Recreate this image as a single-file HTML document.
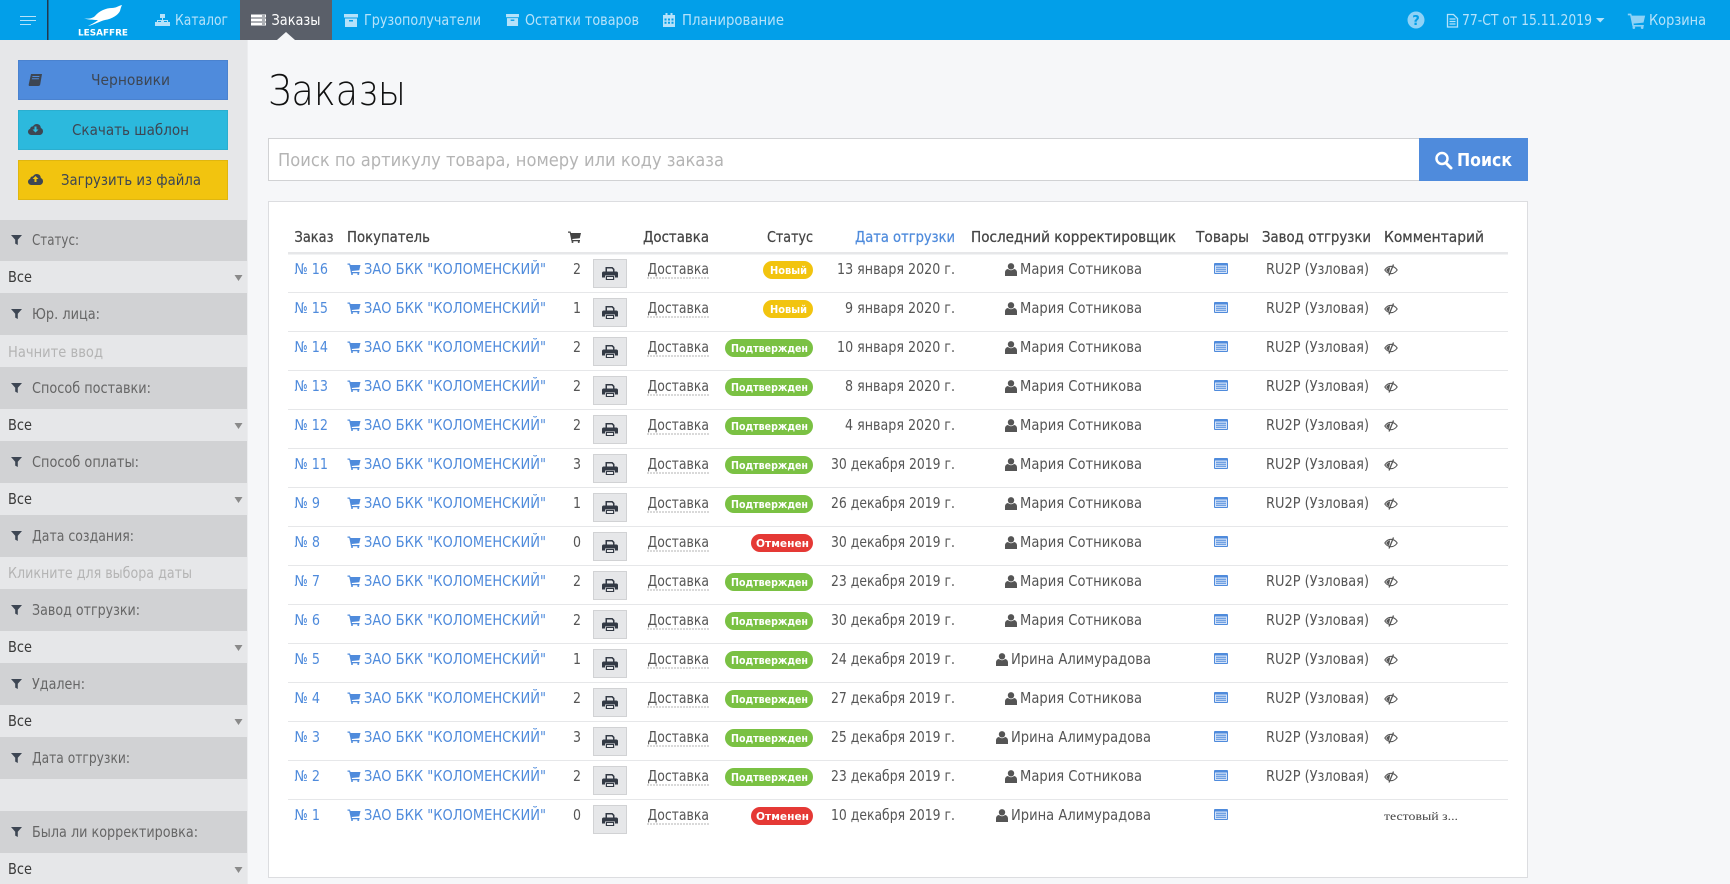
<!DOCTYPE html>
<html lang="ru"><head><meta charset="utf-8"><title>Заказы</title>
<style>
html,body{margin:0;padding:0;width:1730px;height:884px;overflow:hidden;background:#f6f7f9}
svg{display:block}
text{font-family:"DejaVu Sans","Liberation Sans",sans-serif;font-size:15px;fill:#555}
.nav{fill:#b5e2fa}
.btn{fill:#3d4653;font-size:15px}
.lab{fill:#666}
.val{fill:#3a3a3a}
.ph{fill:#b4b4b4}
.th{fill:#444;stroke:#444;stroke-width:.25px}
.a{fill:#4f8bdc}
.dl{fill:#555}
.bd{fill:#fff;font-size:11px;font-weight:bold}
</style></head><body>
<svg xmlns="http://www.w3.org/2000/svg" width="1730" height="884" viewBox="0 0 1730 884">
<defs>
<symbol id="cart" viewBox="0 0 26 24"><path fill="currentColor" d="M0 1h5l1 3h20l-2.500 10.500L8.500 16l.5 2h15v2.500H7L3.500 3.500H0z"/><circle fill="currentColor" cx="9" cy="22" r="2"/><circle fill="currentColor" cx="21.500" cy="22" r="2"/></symbol>
<symbol id="user" viewBox="0 0 12 13"><circle fill="currentColor" cx="6" cy="3.300" r="3.200"/><path fill="currentColor" d="M0 13v-3.500C0 7.500 1.500 6 3 6c.8.800 1.800 1.200 3 1.200S8.200 6.800 9 6c1.500 0 3 1.500 3 3.500V13z"/></symbol>
<symbol id="list" viewBox="0 0 14 11"><rect width="14" height="11" rx="1" fill="#4f8bdc"/><rect x="1" y="2.500" width="12" height="7.500" fill="#d5e3f8"/><path fill="#4f8bdc" d="M2 3.800h10v1H2zM2 5.800h10v1H2zM2 7.800h10v1H2z"/></symbol>
<symbol id="eye" viewBox="0 0 14 12"><path fill="none" stroke="#555" stroke-width="1.100" d="M.8 6C2.500 3.500 4.500 2.300 7 2.300S11.500 3.500 13.200 6C11.500 8.500 9.500 9.700 7 9.700S2.500 8.500.8 6z"/><path fill="#555" d="M2.200 6c1-1.500 2.300-2.400 4-2.800L5 8.700C3.800 8.200 2.900 7.200 2.200 6z"/><path stroke="#555" stroke-width="1.300" d="M9.500.5L5 11.500"/></symbol>
<symbol id="printer" viewBox="0 0 16 13"><path fill="#333a45" d="M3.500 0h7l2 2v3h-1.500V2.800L9.800 1.500H5V5H3.500z"/><path fill="#333a45" d="M1.500 4.500h13c.8 0 1.500.7 1.500 1.500v4.500h-3V8.500H3v2H0V6c0-.8.700-1.500 1.500-1.500z"/><path fill="#333a45" d="M3.800 9h8.400v4H3.800zM5 10v2h6v-2z" fill-rule="evenodd"/></symbol>
<symbol id="funnel" viewBox="0 0 11 10"><path fill="#3d4653" d="M0 0h11L6.800 4.800V10L4.200 8.600V4.800z"/></symbol>
<symbol id="cloud" viewBox="0 0 15 11"><path fill="#3d4653" d="M3.300 11C1.500 11 0 9.600 0 7.800c0-1.400.9-2.600 2.200-3C2.300 3.300 3.500 2.200 5 2.400 5.800 1 7.100 0 8.800 0c2.300 0 4 1.800 4 4 1.300.4 2.200 1.700 2.200 3.200 0 2.100-1.600 3.800-3.700 3.800z"/></symbol>
<symbol id="archive" viewBox="0 0 14 13"><path fill="#b5e2fa" d="M0 0h14v3.500H0zM1 4.500h12V13H1z"/><rect x="5" y="6" width="4" height="1.500" fill="#029fe9"/></symbol>
<g id="caret"><path fill="#8a8a8a" d="M0 0h8L4 6z"/></g>
</defs>

<!-- page -->
<rect width="1730" height="884" fill="#f6f7f9"/>

<!-- top bar -->
<rect width="1730" height="40" fill="#029fe9"/>
<path d="M20 16.500h16M20 20.500h16M20 24.500h11" stroke="#b5e2fa" stroke-width="1"/>
<rect x="47" width="1.500" height="40" fill="#22384d"/>
<path fill="#fff" d="M122 5C118 6 116 8 112 8C106 8 99 11 95 16C93 18 90 19 84 18.500C90 20 95 20 98 20C96 22 92 24 88 26C94 25 100 21 105 20C112 19 118 15 120 11C120.500 9 121 7 122 5z"/>
<text x="78" y="35.500" style="fill:#fff;font-size:9px;font-weight:bold" textLength="50" lengthAdjust="spacingAndGlyphs">LESAFFRE</text>

<!-- nav icons -->
<path fill="#b5e2fa" d="M160 14h5v4h-2v2h5v2h2v4h-5v-4h2v-1h-3v1h1v4h-5v-4h1v-1h-3v1h2v4h-5v-4h2v-2h5v-2h-2z"/>
<text class="nav" x="175" y="25" textLength="53" lengthAdjust="spacingAndGlyphs">Каталог</text>
<rect x="240" width="92" height="40" fill="#5a5f69"/>
<path fill="#f6f7f9" d="M277 40l9-8 9 8z"/>
<path fill="#fff" d="M251 14.500h15v3h-15zM251 18.500h15v3h-15zM251 22.500h15v3h-15z"/>
<path fill="#5a5f69" d="M262 15.500h3v1h-3zM262 19.500h3v1h-3zM262 23.500h3v1h-3z"/>
<text x="271.500" y="25" style="fill:#fff" textLength="49" lengthAdjust="spacingAndGlyphs">Заказы</text>
<use href="#archive" x="344" y="14" width="14" height="13"/>
<text class="nav" x="364" y="25" textLength="117" lengthAdjust="spacingAndGlyphs">Грузополучатели</text>
<use href="#archive" x="506" y="14" width="13" height="12"/>
<text class="nav" x="525" y="25" textLength="114" lengthAdjust="spacingAndGlyphs">Остатки товаров</text>
<path fill="#b5e2fa" fill-rule="evenodd" d="M663 15h2.500v-2h2v2h3v-2h2v2h2.500v12h-12zM664.500 18.500v2h2v-2zM668 18.500v2h2v-2zM671.500 18.500v2h2v-2zM664.500 21.800v2h2v-2zM668 21.800v2h2v-2zM671.500 21.800v2h2v-2z"/>
<text class="nav" x="682" y="25" textLength="102" lengthAdjust="spacingAndGlyphs">Планирование</text>

<circle cx="1416" cy="20" r="8.500" fill="#8fd2f6"/>
<text x="1412.300" y="25" style="fill:#029fe9;font-size:13px;font-weight:bold">?</text>
<path fill="none" stroke="#b5e2fa" stroke-width="1.300" d="M1447.500 14.500h6l4 4v8.500h-10zM1449.500 19h6M1449.500 21.500h6M1449.500 24h6"/>
<text class="nav" x="1462" y="25" textLength="130" lengthAdjust="spacingAndGlyphs">77-СТ от 15.11.2019</text>
<path fill="#b5e2fa" d="M1596 18h8.500l-4.250 4.500z"/>
<use href="#cart" x="1627" y="13" width="19" height="16" style="color:#8fd2f6"/>
<text class="nav" x="1649" y="25" textLength="57" lengthAdjust="spacingAndGlyphs">Корзина</text>

<!-- sidebar -->
<rect y="40" width="247" height="844" fill="#e6e7e9"/>
<rect x="247" y="40" width="1" height="844" fill="#ecedef"/>
<rect x="18.500" y="60.500" width="209" height="39" fill="#4f8bdc" stroke="#4a82cf" stroke-width="1"/>
<rect x="18.500" y="110.500" width="209" height="39" fill="#2cb9dd" stroke="#2aaecf" stroke-width="1"/>
<rect x="18.500" y="160.500" width="209" height="39" fill="#f2c40f" stroke="#e0b60f" stroke-width="1"/>
<path fill="#3d4653" d="M31 74h11l-1.800 10.500c-.2 1-1 1.500-2 1.500H29.500c-.8 0-1-1-.7-2zM32.500 76l-.2 1h7l.2-1zM32 78.300l-.2 1h7l.2-1z" fill-rule="evenodd"/>
<text class="btn" x="91" y="85" textLength="79" lengthAdjust="spacingAndGlyphs">Черновики</text>
<use href="#cloud" x="28" y="124" width="15" height="11"/>
<path fill="#2cb9dd" d="M34.500 126.500h2v3h2l-3 3-3-3h2z"/>
<text class="btn" x="72" y="135" textLength="117" lengthAdjust="spacingAndGlyphs">Скачать шаблон</text>
<use href="#cloud" x="28" y="174" width="15" height="11"/>
<path fill="#f2c40f" d="M35.500 176l3 3h-2v3h-2v-3h-2z"/>
<text class="btn" x="61" y="185" textLength="140" lengthAdjust="spacingAndGlyphs">Загрузить из файла</text>

<g fill="#d1d2d4">
<rect y="220" width="247" height="41"/><rect y="293" width="247" height="42"/><rect y="367" width="247" height="42"/><rect y="441" width="247" height="42"/><rect y="515" width="247" height="42"/><rect y="589" width="247" height="42"/><rect y="663" width="247" height="42"/><rect y="737" width="247" height="42"/><rect y="811" width="247" height="42"/>
</g>
<use href="#funnel" x="11" y="235" width="11" height="10"/><text class="lab" x="32" y="245" textLength="47" lengthAdjust="spacingAndGlyphs">Статус:</text>
<text class="val" x="8" y="282" textLength="24" lengthAdjust="spacingAndGlyphs">Все</text><use href="#caret" x="234.500" y="275"/>
<use href="#funnel" x="11" y="309" width="11" height="10"/><text class="lab" x="32" y="319" textLength="68" lengthAdjust="spacingAndGlyphs">Юр. лица:</text>
<text class="ph" x="8" y="357" textLength="95" lengthAdjust="spacingAndGlyphs">Начните ввод</text>
<use href="#funnel" x="11" y="383" width="11" height="10"/><text class="lab" x="32" y="393" textLength="119" lengthAdjust="spacingAndGlyphs">Способ поставки:</text>
<text class="val" x="8" y="430" textLength="24" lengthAdjust="spacingAndGlyphs">Все</text><use href="#caret" x="234.500" y="423"/>
<use href="#funnel" x="11" y="457" width="11" height="10"/><text class="lab" x="32" y="467" textLength="107" lengthAdjust="spacingAndGlyphs">Способ оплаты:</text>
<text class="val" x="8" y="504" textLength="24" lengthAdjust="spacingAndGlyphs">Все</text><use href="#caret" x="234.500" y="497"/>
<use href="#funnel" x="11" y="531" width="11" height="10"/><text class="lab" x="32" y="541" textLength="102" lengthAdjust="spacingAndGlyphs">Дата создания:</text>
<text class="ph" x="8" y="578" textLength="184" lengthAdjust="spacingAndGlyphs">Кликните для выбора даты</text>
<use href="#funnel" x="11" y="605" width="11" height="10"/><text class="lab" x="32" y="615" textLength="108" lengthAdjust="spacingAndGlyphs">Завод отгрузки:</text>
<text class="val" x="8" y="652" textLength="24" lengthAdjust="spacingAndGlyphs">Все</text><use href="#caret" x="234.500" y="645"/>
<use href="#funnel" x="11" y="679" width="11" height="10"/><text class="lab" x="32" y="689" textLength="53" lengthAdjust="spacingAndGlyphs">Удален:</text>
<text class="val" x="8" y="726" textLength="24" lengthAdjust="spacingAndGlyphs">Все</text><use href="#caret" x="234.500" y="719"/>
<use href="#funnel" x="11" y="753" width="11" height="10"/><text class="lab" x="32" y="763" textLength="98" lengthAdjust="spacingAndGlyphs">Дата отгрузки:</text>
<use href="#funnel" x="11" y="827" width="11" height="10"/><text class="lab" x="32" y="837" textLength="166" lengthAdjust="spacingAndGlyphs">Была ли корректировка:</text>
<text class="val" x="8" y="874" textLength="24" lengthAdjust="spacingAndGlyphs">Все</text><use href="#caret" x="234.500" y="867"/>

<!-- title -->
<text x="268" y="105" style="font-size:42px;font-weight:200;fill:#111" textLength="138" lengthAdjust="spacingAndGlyphs">Заказы</text>

<!-- search -->
<rect x="268.500" y="138.500" width="1151" height="42" fill="#fff" stroke="#d1d2d4"/>
<text x="278" y="166" style="font-size:18px;fill:#b4b4b4" textLength="446" lengthAdjust="spacingAndGlyphs">Поиск по артикулу товара, номеру или коду заказа</text>
<rect x="1419" y="138" width="109" height="43" fill="#4f8bdc"/>
<circle cx="1442" cy="158.500" r="5.500" fill="none" stroke="#fff" stroke-width="2.500"/>
<path d="M1446 163l5 5" stroke="#fff" stroke-width="3" stroke-linecap="round"/>
<text x="1457" y="166" style="fill:#fff;font-size:18px;font-weight:bold" textLength="55" lengthAdjust="spacingAndGlyphs">Поиск</text>

<!-- panel -->
<rect x="268.500" y="201.500" width="1259" height="676" fill="#fff" stroke="#dcdde0"/>

<!-- table header -->
<text class="th" x="294.500" y="242" textLength="39" lengthAdjust="spacingAndGlyphs">Заказ</text>
<text class="th" x="347" y="242" textLength="83" lengthAdjust="spacingAndGlyphs">Покупатель</text>
<use href="#cart" x="568" y="231" width="13" height="12" style="color:#444"/>
<text class="th" x="643" y="242" textLength="66" lengthAdjust="spacingAndGlyphs">Доставка</text>
<text class="th" x="767" y="242" textLength="46" lengthAdjust="spacingAndGlyphs">Статус</text>
<text class="th" x="855" y="242" style="fill:#4f8bdc;stroke:#4f8bdc" textLength="100" lengthAdjust="spacingAndGlyphs">Дата отгрузки</text>
<text class="th" x="971" y="242" textLength="205" lengthAdjust="spacingAndGlyphs">Последний корректировщик</text>
<text class="th" x="1196" y="242" textLength="53" lengthAdjust="spacingAndGlyphs">Товары</text>
<text class="th" x="1262" y="242" textLength="109" lengthAdjust="spacingAndGlyphs">Завод отгрузки</text>
<text class="th" x="1384" y="242" textLength="100" lengthAdjust="spacingAndGlyphs">Комментарий</text>
<rect x="288" y="252" width="1220" height="2.500" fill="#e6e7e9"/>

<!-- row lines -->
<g fill="#e6e7e9">
<rect x="288" y="292" width="1220" height="1"/><rect x="288" y="331" width="1220" height="1"/><rect x="288" y="370" width="1220" height="1"/><rect x="288" y="409" width="1220" height="1"/><rect x="288" y="448" width="1220" height="1"/><rect x="288" y="487" width="1220" height="1"/><rect x="288" y="526" width="1220" height="1"/><rect x="288" y="565" width="1220" height="1"/><rect x="288" y="604" width="1220" height="1"/><rect x="288" y="643" width="1220" height="1"/><rect x="288" y="682" width="1220" height="1"/><rect x="288" y="721" width="1220" height="1"/><rect x="288" y="760" width="1220" height="1"/><rect x="288" y="799" width="1220" height="1"/>
</g>

<defs>
<g id="base">
<use href="#cart" x="347" y="263" width="14" height="12" style="color:#4f8bdc"/>
<rect x="593.500" y="259.500" width="33" height="28" fill="#e6e7e9" stroke="#d1d2d4"/>
<use href="#printer" x="602" y="267" width="16" height="13"/>
<path d="M647.500 278h61.500" stroke="#666" stroke-width="1" stroke-dasharray="1 2"/>
<use href="#list" x="1214" y="263" width="14" height="11"/>
</g>
<g id="eyeb"><use href="#eye" x="1384" y="264" width="14" height="12"/></g>
<g id="m"><use href="#user" x="1005" y="263" width="12" height="13" style="color:#555"/></g>
<g id="i"><use href="#user" x="996" y="263" width="12" height="13" style="color:#555"/></g>
<rect id="gb" x="725" y="261" width="88" height="18" rx="9" fill="#7ac143"/>
<rect id="yb" x="763" y="261" width="50" height="18" rx="9" fill="#f2c40f"/>
<rect id="rb" x="751" y="261" width="62" height="18" rx="9" fill="#e53935"/>
</defs>

<!-- row 16 -->
<g><use href="#base"/><use href="#eyeb"/><use href="#m"/><use href="#yb"/>
<text class="a" x="294.500" y="274" textLength="33.500" lengthAdjust="spacingAndGlyphs">№ 16</text>
<text class="a" x="364" y="274" textLength="182" lengthAdjust="spacingAndGlyphs">ЗАО БКК "КОЛОМЕНСКИЙ"</text>
<text x="573" y="274" textLength="8" lengthAdjust="spacingAndGlyphs">2</text>
<text class="dl" x="647.500" y="274" textLength="61.500" lengthAdjust="spacingAndGlyphs">Доставка</text>
<text class="bd" x="770" y="274" textLength="37" lengthAdjust="spacingAndGlyphs">Новый</text>
<text x="837" y="274" textLength="118" lengthAdjust="spacingAndGlyphs">13 января 2020 г.</text>
<text x="1020" y="274" textLength="122" lengthAdjust="spacingAndGlyphs">Мария Сотникова</text>
<text x="1266" y="274" textLength="103" lengthAdjust="spacingAndGlyphs">RU2P (Узловая)</text></g>

<!-- row 15 -->
<g transform="translate(0,39)"><use href="#base"/><use href="#eyeb"/><use href="#m"/><use href="#yb"/>
<text class="a" x="294.500" y="274" textLength="33.500" lengthAdjust="spacingAndGlyphs">№ 15</text>
<text class="a" x="364" y="274" textLength="182" lengthAdjust="spacingAndGlyphs">ЗАО БКК "КОЛОМЕНСКИЙ"</text>
<text x="573" y="274" textLength="8" lengthAdjust="spacingAndGlyphs">1</text>
<text class="dl" x="647.500" y="274" textLength="61.500" lengthAdjust="spacingAndGlyphs">Доставка</text>
<text class="bd" x="770" y="274" textLength="37" lengthAdjust="spacingAndGlyphs">Новый</text>
<text x="845" y="274" textLength="110" lengthAdjust="spacingAndGlyphs">9 января 2020 г.</text>
<text x="1020" y="274" textLength="122" lengthAdjust="spacingAndGlyphs">Мария Сотникова</text>
<text x="1266" y="274" textLength="103" lengthAdjust="spacingAndGlyphs">RU2P (Узловая)</text></g>

<!-- row 14 -->
<g transform="translate(0,78)"><use href="#base"/><use href="#eyeb"/><use href="#m"/><use href="#gb"/>
<text class="a" x="294.500" y="274" textLength="33.500" lengthAdjust="spacingAndGlyphs">№ 14</text>
<text class="a" x="364" y="274" textLength="182" lengthAdjust="spacingAndGlyphs">ЗАО БКК "КОЛОМЕНСКИЙ"</text>
<text x="573" y="274" textLength="8" lengthAdjust="spacingAndGlyphs">2</text>
<text class="dl" x="647.500" y="274" textLength="61.500" lengthAdjust="spacingAndGlyphs">Доставка</text>
<text class="bd" x="731" y="274" textLength="77" lengthAdjust="spacingAndGlyphs">Подтвержден</text>
<text x="837" y="274" textLength="118" lengthAdjust="spacingAndGlyphs">10 января 2020 г.</text>
<text x="1020" y="274" textLength="122" lengthAdjust="spacingAndGlyphs">Мария Сотникова</text>
<text x="1266" y="274" textLength="103" lengthAdjust="spacingAndGlyphs">RU2P (Узловая)</text></g>

<!-- row 13 -->
<g transform="translate(0,117)"><use href="#base"/><use href="#eyeb"/><use href="#m"/><use href="#gb"/>
<text class="a" x="294.500" y="274" textLength="33.500" lengthAdjust="spacingAndGlyphs">№ 13</text>
<text class="a" x="364" y="274" textLength="182" lengthAdjust="spacingAndGlyphs">ЗАО БКК "КОЛОМЕНСКИЙ"</text>
<text x="573" y="274" textLength="8" lengthAdjust="spacingAndGlyphs">2</text>
<text class="dl" x="647.500" y="274" textLength="61.500" lengthAdjust="spacingAndGlyphs">Доставка</text>
<text class="bd" x="731" y="274" textLength="77" lengthAdjust="spacingAndGlyphs">Подтвержден</text>
<text x="845" y="274" textLength="110" lengthAdjust="spacingAndGlyphs">8 января 2020 г.</text>
<text x="1020" y="274" textLength="122" lengthAdjust="spacingAndGlyphs">Мария Сотникова</text>
<text x="1266" y="274" textLength="103" lengthAdjust="spacingAndGlyphs">RU2P (Узловая)</text></g>

<!-- row 12 -->
<g transform="translate(0,156)"><use href="#base"/><use href="#eyeb"/><use href="#m"/><use href="#gb"/>
<text class="a" x="294.500" y="274" textLength="33.500" lengthAdjust="spacingAndGlyphs">№ 12</text>
<text class="a" x="364" y="274" textLength="182" lengthAdjust="spacingAndGlyphs">ЗАО БКК "КОЛОМЕНСКИЙ"</text>
<text x="573" y="274" textLength="8" lengthAdjust="spacingAndGlyphs">2</text>
<text class="dl" x="647.500" y="274" textLength="61.500" lengthAdjust="spacingAndGlyphs">Доставка</text>
<text class="bd" x="731" y="274" textLength="77" lengthAdjust="spacingAndGlyphs">Подтвержден</text>
<text x="845" y="274" textLength="110" lengthAdjust="spacingAndGlyphs">4 января 2020 г.</text>
<text x="1020" y="274" textLength="122" lengthAdjust="spacingAndGlyphs">Мария Сотникова</text>
<text x="1266" y="274" textLength="103" lengthAdjust="spacingAndGlyphs">RU2P (Узловая)</text></g>

<!-- row 11 -->
<g transform="translate(0,195)"><use href="#base"/><use href="#eyeb"/><use href="#m"/><use href="#gb"/>
<text class="a" x="294.500" y="274" textLength="33.500" lengthAdjust="spacingAndGlyphs">№ 11</text>
<text class="a" x="364" y="274" textLength="182" lengthAdjust="spacingAndGlyphs">ЗАО БКК "КОЛОМЕНСКИЙ"</text>
<text x="573" y="274" textLength="8" lengthAdjust="spacingAndGlyphs">3</text>
<text class="dl" x="647.500" y="274" textLength="61.500" lengthAdjust="spacingAndGlyphs">Доставка</text>
<text class="bd" x="731" y="274" textLength="77" lengthAdjust="spacingAndGlyphs">Подтвержден</text>
<text x="831" y="274" textLength="124" lengthAdjust="spacingAndGlyphs">30 декабря 2019 г.</text>
<text x="1020" y="274" textLength="122" lengthAdjust="spacingAndGlyphs">Мария Сотникова</text>
<text x="1266" y="274" textLength="103" lengthAdjust="spacingAndGlyphs">RU2P (Узловая)</text></g>

<!-- row 9 -->
<g transform="translate(0,234)"><use href="#base"/><use href="#eyeb"/><use href="#m"/><use href="#gb"/>
<text class="a" x="294.500" y="274" textLength="25.500" lengthAdjust="spacingAndGlyphs">№ 9</text>
<text class="a" x="364" y="274" textLength="182" lengthAdjust="spacingAndGlyphs">ЗАО БКК "КОЛОМЕНСКИЙ"</text>
<text x="573" y="274" textLength="8" lengthAdjust="spacingAndGlyphs">1</text>
<text class="dl" x="647.500" y="274" textLength="61.500" lengthAdjust="spacingAndGlyphs">Доставка</text>
<text class="bd" x="731" y="274" textLength="77" lengthAdjust="spacingAndGlyphs">Подтвержден</text>
<text x="831" y="274" textLength="124" lengthAdjust="spacingAndGlyphs">26 декабря 2019 г.</text>
<text x="1020" y="274" textLength="122" lengthAdjust="spacingAndGlyphs">Мария Сотникова</text>
<text x="1266" y="274" textLength="103" lengthAdjust="spacingAndGlyphs">RU2P (Узловая)</text></g>

<!-- row 8 -->
<g transform="translate(0,273)"><use href="#base"/><use href="#eyeb"/><use href="#m"/><use href="#rb"/>
<text class="a" x="294.500" y="274" textLength="25.500" lengthAdjust="spacingAndGlyphs">№ 8</text>
<text class="a" x="364" y="274" textLength="182" lengthAdjust="spacingAndGlyphs">ЗАО БКК "КОЛОМЕНСКИЙ"</text>
<text x="573" y="274" textLength="8" lengthAdjust="spacingAndGlyphs">0</text>
<text class="dl" x="647.500" y="274" textLength="61.500" lengthAdjust="spacingAndGlyphs">Доставка</text>
<text class="bd" x="756" y="274" textLength="53" lengthAdjust="spacingAndGlyphs">Отменен</text>
<text x="831" y="274" textLength="124" lengthAdjust="spacingAndGlyphs">30 декабря 2019 г.</text>
<text x="1020" y="274" textLength="122" lengthAdjust="spacingAndGlyphs">Мария Сотникова</text></g>

<!-- row 7 -->
<g transform="translate(0,312)"><use href="#base"/><use href="#eyeb"/><use href="#m"/><use href="#gb"/>
<text class="a" x="294.500" y="274" textLength="25.500" lengthAdjust="spacingAndGlyphs">№ 7</text>
<text class="a" x="364" y="274" textLength="182" lengthAdjust="spacingAndGlyphs">ЗАО БКК "КОЛОМЕНСКИЙ"</text>
<text x="573" y="274" textLength="8" lengthAdjust="spacingAndGlyphs">2</text>
<text class="dl" x="647.500" y="274" textLength="61.500" lengthAdjust="spacingAndGlyphs">Доставка</text>
<text class="bd" x="731" y="274" textLength="77" lengthAdjust="spacingAndGlyphs">Подтвержден</text>
<text x="831" y="274" textLength="124" lengthAdjust="spacingAndGlyphs">23 декабря 2019 г.</text>
<text x="1020" y="274" textLength="122" lengthAdjust="spacingAndGlyphs">Мария Сотникова</text>
<text x="1266" y="274" textLength="103" lengthAdjust="spacingAndGlyphs">RU2P (Узловая)</text></g>

<!-- row 6 -->
<g transform="translate(0,351)"><use href="#base"/><use href="#eyeb"/><use href="#m"/><use href="#gb"/>
<text class="a" x="294.500" y="274" textLength="25.500" lengthAdjust="spacingAndGlyphs">№ 6</text>
<text class="a" x="364" y="274" textLength="182" lengthAdjust="spacingAndGlyphs">ЗАО БКК "КОЛОМЕНСКИЙ"</text>
<text x="573" y="274" textLength="8" lengthAdjust="spacingAndGlyphs">2</text>
<text class="dl" x="647.500" y="274" textLength="61.500" lengthAdjust="spacingAndGlyphs">Доставка</text>
<text class="bd" x="731" y="274" textLength="77" lengthAdjust="spacingAndGlyphs">Подтвержден</text>
<text x="831" y="274" textLength="124" lengthAdjust="spacingAndGlyphs">30 декабря 2019 г.</text>
<text x="1020" y="274" textLength="122" lengthAdjust="spacingAndGlyphs">Мария Сотникова</text>
<text x="1266" y="274" textLength="103" lengthAdjust="spacingAndGlyphs">RU2P (Узловая)</text></g>

<!-- row 5 -->
<g transform="translate(0,390)"><use href="#base"/><use href="#eyeb"/><use href="#i"/><use href="#gb"/>
<text class="a" x="294.500" y="274" textLength="25.500" lengthAdjust="spacingAndGlyphs">№ 5</text>
<text class="a" x="364" y="274" textLength="182" lengthAdjust="spacingAndGlyphs">ЗАО БКК "КОЛОМЕНСКИЙ"</text>
<text x="573" y="274" textLength="8" lengthAdjust="spacingAndGlyphs">1</text>
<text class="dl" x="647.500" y="274" textLength="61.500" lengthAdjust="spacingAndGlyphs">Доставка</text>
<text class="bd" x="731" y="274" textLength="77" lengthAdjust="spacingAndGlyphs">Подтвержден</text>
<text x="831" y="274" textLength="124" lengthAdjust="spacingAndGlyphs">24 декабря 2019 г.</text>
<text x="1011" y="274" textLength="140" lengthAdjust="spacingAndGlyphs">Ирина Алимурадова</text>
<text x="1266" y="274" textLength="103" lengthAdjust="spacingAndGlyphs">RU2P (Узловая)</text></g>

<!-- row 4 -->
<g transform="translate(0,429)"><use href="#base"/><use href="#eyeb"/><use href="#m"/><use href="#gb"/>
<text class="a" x="294.500" y="274" textLength="25.500" lengthAdjust="spacingAndGlyphs">№ 4</text>
<text class="a" x="364" y="274" textLength="182" lengthAdjust="spacingAndGlyphs">ЗАО БКК "КОЛОМЕНСКИЙ"</text>
<text x="573" y="274" textLength="8" lengthAdjust="spacingAndGlyphs">2</text>
<text class="dl" x="647.500" y="274" textLength="61.500" lengthAdjust="spacingAndGlyphs">Доставка</text>
<text class="bd" x="731" y="274" textLength="77" lengthAdjust="spacingAndGlyphs">Подтвержден</text>
<text x="831" y="274" textLength="124" lengthAdjust="spacingAndGlyphs">27 декабря 2019 г.</text>
<text x="1020" y="274" textLength="122" lengthAdjust="spacingAndGlyphs">Мария Сотникова</text>
<text x="1266" y="274" textLength="103" lengthAdjust="spacingAndGlyphs">RU2P (Узловая)</text></g>

<!-- row 3 -->
<g transform="translate(0,468)"><use href="#base"/><use href="#eyeb"/><use href="#i"/><use href="#gb"/>
<text class="a" x="294.500" y="274" textLength="25.500" lengthAdjust="spacingAndGlyphs">№ 3</text>
<text class="a" x="364" y="274" textLength="182" lengthAdjust="spacingAndGlyphs">ЗАО БКК "КОЛОМЕНСКИЙ"</text>
<text x="573" y="274" textLength="8" lengthAdjust="spacingAndGlyphs">3</text>
<text class="dl" x="647.500" y="274" textLength="61.500" lengthAdjust="spacingAndGlyphs">Доставка</text>
<text class="bd" x="731" y="274" textLength="77" lengthAdjust="spacingAndGlyphs">Подтвержден</text>
<text x="831" y="274" textLength="124" lengthAdjust="spacingAndGlyphs">25 декабря 2019 г.</text>
<text x="1011" y="274" textLength="140" lengthAdjust="spacingAndGlyphs">Ирина Алимурадова</text>
<text x="1266" y="274" textLength="103" lengthAdjust="spacingAndGlyphs">RU2P (Узловая)</text></g>

<!-- row 2 -->
<g transform="translate(0,507)"><use href="#base"/><use href="#eyeb"/><use href="#m"/><use href="#gb"/>
<text class="a" x="294.500" y="274" textLength="25.500" lengthAdjust="spacingAndGlyphs">№ 2</text>
<text class="a" x="364" y="274" textLength="182" lengthAdjust="spacingAndGlyphs">ЗАО БКК "КОЛОМЕНСКИЙ"</text>
<text x="573" y="274" textLength="8" lengthAdjust="spacingAndGlyphs">2</text>
<text class="dl" x="647.500" y="274" textLength="61.500" lengthAdjust="spacingAndGlyphs">Доставка</text>
<text class="bd" x="731" y="274" textLength="77" lengthAdjust="spacingAndGlyphs">Подтвержден</text>
<text x="831" y="274" textLength="124" lengthAdjust="spacingAndGlyphs">23 декабря 2019 г.</text>
<text x="1020" y="274" textLength="122" lengthAdjust="spacingAndGlyphs">Мария Сотникова</text>
<text x="1266" y="274" textLength="103" lengthAdjust="spacingAndGlyphs">RU2P (Узловая)</text></g>

<!-- row 1 -->
<g transform="translate(0,546)"><use href="#base"/><use href="#i"/><use href="#rb"/>
<text class="a" x="294.500" y="274" textLength="25.500" lengthAdjust="spacingAndGlyphs">№ 1</text>
<text class="a" x="364" y="274" textLength="182" lengthAdjust="spacingAndGlyphs">ЗАО БКК "КОЛОМЕНСКИЙ"</text>
<text x="573" y="274" textLength="8" lengthAdjust="spacingAndGlyphs">0</text>
<text class="dl" x="647.500" y="274" textLength="61.500" lengthAdjust="spacingAndGlyphs">Доставка</text>
<text class="bd" x="756" y="274" textLength="53" lengthAdjust="spacingAndGlyphs">Отменен</text>
<text x="831" y="274" textLength="124" lengthAdjust="spacingAndGlyphs">10 декабря 2019 г.</text>
<text x="1011" y="274" textLength="140" lengthAdjust="spacingAndGlyphs">Ирина Алимурадова</text>
<text x="1384" y="274" style="font-family:'Liberation Serif',serif;font-size:12px;fill:#444" textLength="74" lengthAdjust="spacingAndGlyphs">тестовый з...</text></g>
</svg>
</body></html>
